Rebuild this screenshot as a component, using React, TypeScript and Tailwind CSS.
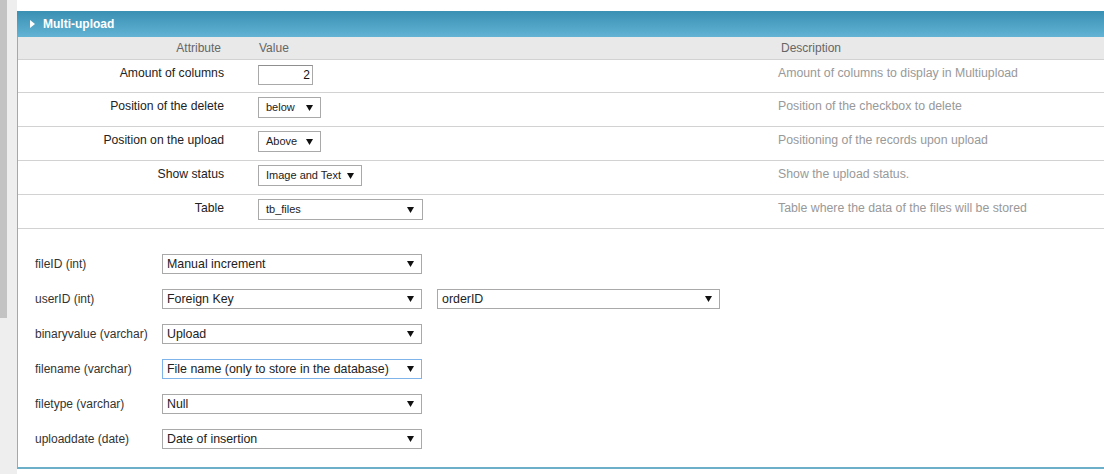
import React from "react"

const Arrow = () => (
	<svg width="7" height="6" viewBox="0 0 7 6" className="shrink-0">
		<polygon points="0,0 7,0 3.5,6" fill="#111" />
	</svg>
)

type SelProps = { text: string; className: string; textClass: string; focus?: boolean }

const FakeSelect = ({ text, className, textClass, focus }: SelProps) => (
	<div
		className={`flex items-center justify-between bg-white border ${focus ? "border-[#7eb4ea]" : "border-[#a9a9a9]"} ${className}`}
	>
		<span className={`text-[#222] whitespace-nowrap ${textClass}`}>{text}</span>
		<Arrow />
	</div>
)

const attrRows = [
	{ label: "Amount of columns", desc: "Amount of columns to display in Multiupload", kind: "input" },
	{ label: "Position of the delete", desc: "Position of the checkbox to delete", kind: "below" },
	{ label: "Position on the upload", desc: "Positioning of the records upon upload", kind: "above" },
	{ label: "Show status", desc: "Show the upload status.", kind: "status" },
	{ label: "Table", desc: "Table where the data of the files will be stored", kind: "table" },
]

const fieldRows = [
	{ label: "fileID (int)", value: "Manual increment" },
	{ label: "userID (int)", value: "Foreign Key", extra: "orderID" },
	{ label: "binaryvalue (varchar)", value: "Upload" },
	{ label: "filename (varchar)", value: "File name (only to store in the database)", focus: true },
	{ label: "filetype (varchar)", value: "Null" },
	{ label: "uploaddate (date)", value: "Date of insertion" },
]

const ValueCell = ({ kind }: { kind: string }) => {
	if (kind === "input")
		return (
			<div className="w-[55px] h-[20px] border border-[#a9a9a9] border-t-[#8f8f8f] bg-white flex items-center justify-end pr-[2px] text-[12px] text-[#111]">
				2
			</div>
		)
	if (kind === "below")
		return <FakeSelect text="below" className="w-[63px] h-[21px] pl-[7px] pr-[7px]" textClass="text-[11px]" />
	if (kind === "above")
		return <FakeSelect text="Above" className="w-[63px] h-[21px] pl-[7px] pr-[7px]" textClass="text-[11px]" />
	if (kind === "status")
		return <FakeSelect text="Image and Text" className="w-[104px] h-[21px] pl-[7px] pr-[7px]" textClass="text-[11px]" />
	return <FakeSelect text="tb_files" className="w-[165px] h-[21px] pl-[7px] pr-[8px]" textClass="text-[11px]" />
}

export default function App() {
	return (
		<div className="flex w-[1104px] h-[474px] overflow-hidden bg-white font-['Liberation_Sans',Arial,sans-serif]">
			<div className="w-[17px] shrink-0 bg-[#eeeeee]">
				<div className="w-[7px] h-[318px] bg-[#c3c3c3]" />
			</div>
			<div className="flex-1 pt-[11px]">
				<div className="h-[26px] flex items-center pl-[13px] bg-gradient-to-b from-[#3990b3] to-[#62b3d4]">
					<svg width="5" height="8" viewBox="0 0 5 8" className="mr-[8px]">
						<polygon points="0,0 5,4 0,8" fill="#fff" />
					</svg>
					<span className="text-white font-bold text-[12px]">Multi-upload</span>
				</div>
				<div className="border-l border-b-2 border-l-[#7ab7ce] border-b-[#6cafc9]">
					<div className="grid grid-cols-[240px_520px_1fr] h-[23px] items-center bg-[#e9e9e9] border-b border-[#d2d2d2] text-[12px] text-[#666]">
						<div className="text-right pr-[37px]">Attribute</div>
						<div className="pl-[1px]">Value</div>
						<div className="pl-[3px]">Description</div>
					</div>
					{attrRows.map((r, i) => (
						<div
							key={r.label}
							className={`grid grid-cols-[240px_520px_1fr] border-b border-[#d2d2d2] text-[12px] ${i === 0 ? "h-[33px]" : "h-[34px]"}`}
						>
							<div className="text-right pr-[34px] pt-[4px] text-[#222] text-[12.2px]">{r.label}</div>
							<div className={i === 0 ? "pt-[5px]" : "pt-[4px]"}>
								<ValueCell kind={r.kind} />
							</div>
							<div className="pt-[4px] text-[#999] text-[12.3px]">{r.desc}</div>
						</div>
					))}
					<div className="pt-[25px] pb-[18px] pl-[17px] flex flex-col gap-[15px]">
						{fieldRows.map((f) => (
							<div key={f.label} className="flex items-center h-[20px]">
								<div className="w-[127px] text-[12px] text-[#333]">{f.label}</div>
								<FakeSelect
									text={f.value}
									focus={f.focus}
									className="w-[260px] h-[20px] pl-[4px] pr-[7px]"
									textClass="text-[12.4px]"
								/>
								{f.extra && (
									<FakeSelect
										text={f.extra}
										className="ml-[15px] w-[283px] h-[20px] pl-[4px] pr-[7px]"
										textClass="text-[12.4px]"
									/>
								)}
							</div>
						))}
					</div>
				</div>
			</div>
		</div>
	)
}
